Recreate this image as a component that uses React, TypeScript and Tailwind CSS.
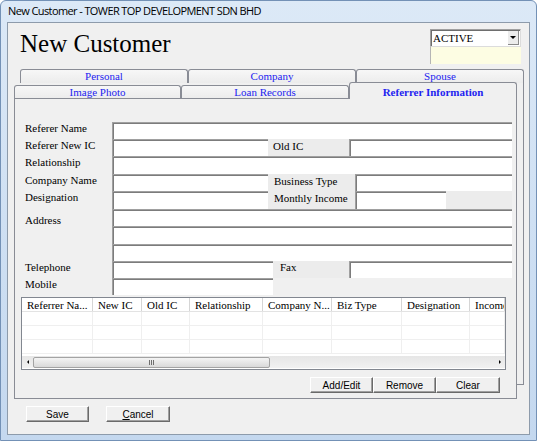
import React from 'react';

// Times-like face for the form, Arial-like face for the push buttons
const serif = "font-['Liberation_Serif','Times_New_Roman',serif]";
const sans = "font-['Liberation_Sans',Arial,sans-serif]";

type Col = { label: string; w: string };

const COLS: Col[] = [
  { label: 'Referrer Na...', w: 'w-[71px]' },
  { label: 'New IC', w: 'w-[49px]' },
  { label: 'Old IC', w: 'w-[48px]' },
  { label: 'Relationship', w: 'w-[73px]' },
  { label: 'Company N...', w: 'w-[69px]' },
  { label: 'Biz Type', w: 'w-[70px]' },
  { label: 'Designation', w: 'w-[68px]' },
  { label: 'Income', w: 'flex-1' },
];

export default function App() {
  return (
    <div className="flex h-[441px] w-[537px] flex-col overflow-hidden rounded-t-[6px] border border-[#7391b6] bg-gradient-to-b from-[#dce9f7] via-[#cfe0f3] to-[#c4d8ef]">
      {/* title bar */}
      <div className="flex h-[21px] items-center pl-[7px] font-['Open_Sans',sans-serif] text-[11px] tracking-[-0.6px] text-black">
        New Customer - TOWER TOP DEVELOPMENT SDN BHD
      </div>

      {/* client area */}
      <div className="mx-[6px] mb-[5px] flex-1 border border-[#8d9bab] bg-[#f0f0f0]">
        <Header />
        <TabArea />
        <div className="mt-[21px] flex gap-[17px] pl-[18px]">
          <Btn className="w-[63px]">Save</Btn>
          <Btn className="w-[64px]">
            <span className="underline">C</span>ancel
          </Btn>
        </div>
      </div>
    </div>
  );
}

function Header() {
  return (
    <div className="flex items-start justify-between pl-[12px] pr-[8px] pt-[6px]">
      <h1 className={`${serif} text-[25px] leading-[30px] text-black`}>New Customer</h1>
      <div className="w-[91px]">
        <div className="flex h-[18px] border-t border-l border-r border-b border-t-[#a0a0a0] border-l-[#a0a0a0] border-r-[#dcdcdc] border-b-[#dcdcdc] bg-white shadow-[inset_1px_1px_0_#6e6e6e]">
          <span className={`${serif} flex-1 pl-[2px] pt-[1px] text-[11px] leading-[15px] text-black`}>ACTIVE</span>
          <div className="my-[1px] mr-[1px] flex w-[11px] items-center justify-center border-r border-b border-r-[#8a8a8a] border-b-[#8a8a8a] bg-[#ececec]">
            <span className="h-0 w-0 border-x-[3px] border-t-[3px] border-x-transparent border-t-black" />
          </div>
        </div>
        <div className="h-[17px] border-l border-[#b5b5b5] bg-[#fdfde3]" />
      </div>
    </div>
  );
}

function BackTab({ w, children }: { w: string; children: React.ReactNode }) {
  return (
    <div
      className={`${w} ${serif} h-[14px] rounded-t-[3px] border border-b-0 border-[#898c95] bg-gradient-to-b from-[#f7f7f7] to-[#ececec] text-center text-[11px] leading-[13px] text-[#2323f0]`}
    >
      {children}
    </div>
  );
}

function TabArea() {
  return (
    <div className="mt-[5px] ml-[12px] mr-[5px]">
      <div className="flex">
        <BackTab w="w-[168px]">Personal</BackTab>
        <BackTab w="w-[168px]">Company</BackTab>
        <BackTab w="w-[168px]">Spouse</BackTab>
      </div>

      {/* back page: only its right and bottom edge peek out */}
      <div className="border-r border-b border-[#898c95] pt-[1px]">
        <div className="-mb-[15px] -ml-[6px] mr-[6px]">
          <div className="flex h-[14px] items-end">
            <div className={`${serif} h-[13px] w-[167px] rounded-t-[3px] border border-b-0 border-[#898c95] bg-gradient-to-b from-[#f7f7f7] to-[#ececec] text-center text-[11px] leading-[12px] text-[#2323f0]`}>
              Image Photo
            </div>
            <div className={`${serif} h-[13px] w-[168px] rounded-t-[3px] border border-b-0 border-[#898c95] bg-gradient-to-b from-[#f7f7f7] to-[#ececec] text-center text-[11px] leading-[12px] text-[#2323f0]`}>
              Loan Records
            </div>
            <div className={`${serif} relative z-10 -mb-px h-[17px] w-[168px] rounded-t-[3px] border border-b-0 border-[#898c95] bg-[#f0f0f0] pt-[2px] text-center text-[11px] font-bold leading-[14px] text-[#1f1ff0]`}>
              Referrer Information
            </div>
          </div>

          <div className="flex h-[301px] flex-col border border-[#898c95] bg-[#f0f0f0]">
            <Form />
            <Grid />
            <div className="mt-[7px] flex justify-end pr-[16px]">
              <Btn className="w-[63px]">Add/Edit</Btn>
              <Btn className="w-[63px]">Remove</Btn>
              <Btn className="w-[64px]">Clear</Btn>
            </div>
          </div>
        </div>
      </div>
    </div>
  );
}

// sunken text box: grey outer line plus darker inner line on top and left
function Field({ className = 'flex-1' }: { className?: string }) {
  return (
    <div
      className={`${className} h-full border-t border-l border-[#a0a0a0] bg-white shadow-[inset_1px_1px_0_#7c7c7c]`}
    />
  );
}

function Label({ children, className = 'w-[87px]' }: { children?: React.ReactNode; className?: string }) {
  return (
    <div className={`${className} ${serif} shrink-0 text-[11px] leading-[13px] whitespace-nowrap text-black`}>
      {children}
    </div>
  );
}

function Form() {
  return (
    <div className="mt-[23px] mr-[4px] ml-[10px] flex flex-col">
      <div className="flex h-[17px]">
        <Label>Referer Name</Label>
        <Field />
      </div>
      <div className="flex h-[17px]">
        <Label>Referer New IC</Label>
        <Field className="w-[156px]" />
        <Label className="w-[81px] bg-[#ececec] pl-[5px] pt-[1px]">Old IC</Label>
        <Field />
      </div>
      <div className="flex h-[18px]">
        <Label>Relationship</Label>
        <Field />
      </div>
      <div className="flex h-[17px]">
        <Label>Company Name</Label>
        <Field className="w-[156px]" />
        <Label className="w-[87px] bg-[#ececec] pl-[6px] pt-[1px]">Business Type</Label>
        <Field />
      </div>
      <div className="flex h-[18px]">
        <Label>Designation</Label>
        <Field className="w-[156px]" />
        <Label className="w-[87px] bg-[#ececec] pl-[6px] pt-[1px]">Monthly Income</Label>
        <Field className="w-[91px]" />
        <div className="flex-1 bg-[#ececec]" />
      </div>
      <div className="flex h-[17px]">
        <Label className="w-[87px] pt-[5px]">Address</Label>
        <Field />
      </div>
      <div className="flex h-[18px]">
        <Label />
        <Field />
      </div>
      <div className="flex h-[17px]">
        <Label />
        <Field />
      </div>
      <div className="flex h-[17px]">
        <Label>Telephone</Label>
        <Field className="w-[161px]" />
        <Label className="w-[76px] bg-[#ececec] pl-[7px]">Fax</Label>
        <Field />
      </div>
      <div className="flex h-[17px]">
        <Label>Mobile</Label>
        <Field className="w-[161px]" />
        <div className="flex-1" />
      </div>
    </div>
  );
}

function Grid() {
  return (
    <div className="mt-[2px] mr-[10px] ml-[6px] flex h-[73px] flex-col border border-[#828790] bg-white">
      <div className="flex h-[14px] border-b border-[#e3e3e3]">
        {COLS.map((c) => (
          <div
            key={c.label}
            className={`${c.w} ${serif} overflow-hidden border-r border-[#d5d5d5] pl-[5px] text-[11px] leading-[14px] whitespace-nowrap text-black`}
          >
            {c.label}
          </div>
        ))}
      </div>
      {[0, 1, 2].map((r) => (
        <div key={r} className="flex h-[14px]">
          {COLS.map((c) => (
            <div key={c.label} className={`${c.w} border-r border-b border-[#efefef]`} />
          ))}
        </div>
      ))}
      <div className="h-[2px]" />
      <ScrollBar />
    </div>
  );
}

function ScrollBar() {
  return (
    <div className="flex h-[12px] items-center bg-gradient-to-b from-[#e6e6e6] to-[#f1f1f1]">
      <div className="flex w-[11px] justify-center">
        <span className="h-0 w-0 border-y-[2px] border-r-[2px] border-y-transparent border-r-black" />
      </div>
      <div className="flex h-[11px] w-[237px] items-center justify-center gap-[1px] rounded-[2px] border border-[#a3a3a3] bg-gradient-to-b from-[#f4f4f4] to-[#d9d9d9]">
        <span className="h-[5px] w-[1px] bg-[#6f6f6f]" />
        <span className="h-[5px] w-[1px] bg-[#6f6f6f]" />
        <span className="h-[5px] w-[1px] bg-[#6f6f6f]" />
      </div>
      <div className="flex-1" />
      <div className="flex w-[11px] justify-center">
        <span className="h-0 w-0 border-y-[2px] border-l-[2px] border-y-transparent border-l-black" />
      </div>
    </div>
  );
}

function Btn({ className, children }: { className: string; children: React.ReactNode }) {
  return (
    <div
      className={`${className} ${sans} flex h-[16px] items-center justify-center border border-t-white border-l-white border-r-[#6a6a6a] border-b-[#6a6a6a] bg-[#f0f0f0] text-[10px] text-black shadow-[inset_-1px_-1px_0_#a0a0a0]`}
    >
      {children}
    </div>
  );
}
